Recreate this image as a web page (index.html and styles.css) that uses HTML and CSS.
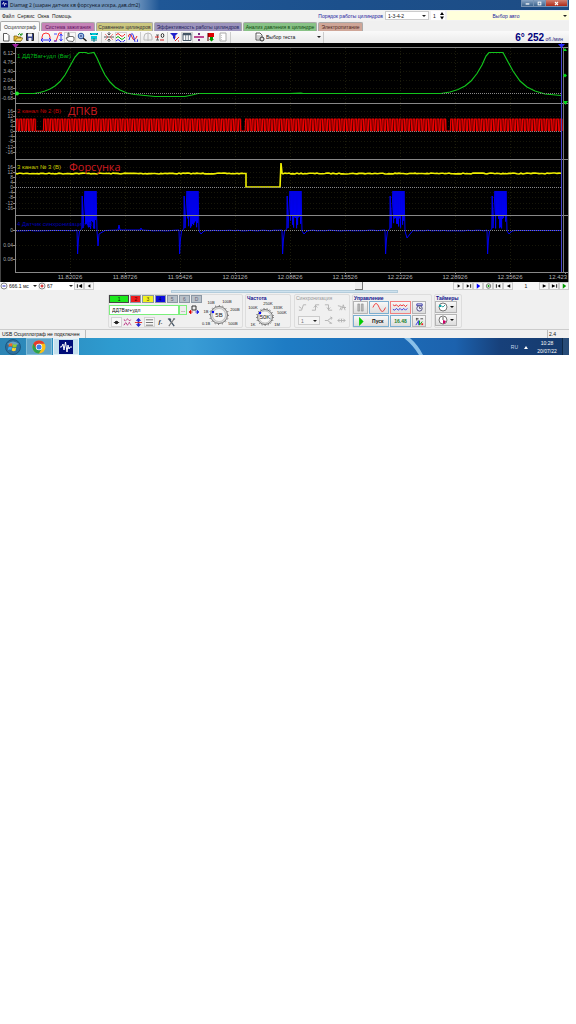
FILE: index.html
```html
<!DOCTYPE html>
<html lang="ru">
<head>
    <meta charset="UTF-8">
    <meta name="viewport" content="width=device-width, initial-scale=1.0">
    <title>Diamag 2</title>
    <link rel="stylesheet" href="styles.css">
</head>
<body>
    <div class="desktop">
        <header class="titlebar">
            <svg class="app-icon" viewBox="0 0 8 8"><rect width="8" height="8" rx="1" fill="#000c80"/><path d="M1 4h1l1-2 1 4 1-3 1 1h1" fill="none" stroke="#fff" stroke-width=".8"/></svg>
            <h1>Diamag 2 (шаран датчик кв форсунка искра, дав.dm2)</h1>
            <div class="window-buttons">
                <button class="min" aria-label="Свернуть"><svg viewBox="0 0 12 7"><path d="M4 4h4" stroke="#fff" stroke-width="1.4"/></svg></button>
                <button class="max" aria-label="Развернуть"><svg viewBox="0 0 12 7"><rect x="4.5" y="2" width="3" height="3" fill="none" stroke="#fff"/></svg></button>
                <button class="close" aria-label="Закрыть"><svg viewBox="0 0 16 7"><path d="M6.5 2l3 3m0-3l-3 3" stroke="#fff" stroke-width="1.1"/></svg></button>
            </div>
        </header>

        <div class="menubar">
            <nav>
                <a href="#">Файл</a>
                <a href="#">Сервис</a>
                <a href="#">Окна</a>
                <a href="#">Помощь</a>
            </nav>
            <label class="order-label" for="order">Порядок работы цилиндров</label>
            <span class="drop order"><select id="order"><option>1-3-4-2</option></select></span>
            <input class="cylinder" type="text" value="1" aria-label="Цилиндр">
            <svg class="spin" viewBox="0 0 6 9"><path d="M1 4l2-3 2 3zM1 5.500l2 3 2-3z"/></svg>
            <span class="drop car"><select aria-label="Авто"><option>Выбор авто</option></select></span>
        </div>

        <div class="tabs">
            <button class="tab active">Осциллограф</button>
            <button class="tab ignition">Система зажигания</button>
            <button class="tab compare">Сравнение цилиндров</button>
            <button class="tab effect">Эффективность работы цилиндров</button>
            <button class="tab pressure">Анализ давления в цилиндре</button>
            <button class="tab power">Электропитание</button>
        </div>

        <div class="toolbar">
            <div class="tools files">
                <button aria-label="Новый"><svg viewBox="0 0 10 10"><path d="M2.500 1.500h3.500l2 2v5.500h-5.500z" fill="#fff" stroke="#333" stroke-width=".8"/></svg></button>
                <button aria-label="Открыть"><svg viewBox="0 0 10 10"><path d="M1 9V4h3l1 1h3v4z" fill="#e8b838" stroke="#6b5000" stroke-width=".7"/><path d="M2 9l2-3h6L8 9z" fill="#ffe070" stroke="#6b5000" stroke-width=".6"/><path d="M5 3q2-3 3 0M7 3h2V1" fill="none" stroke="#080" stroke-width=".9"/></svg></button>
                <button aria-label="Сохранить"><svg viewBox="0 0 10 10"><path d="M1.500 1.500h7v7h-7z" fill="#38458c" stroke="#222"/><path d="M3 1.500h4v3H3zM3.500 6h3v3h-3z" fill="#eee"/></svg></button>
            </div>
            <div class="tools">
                <button aria-label="Период"><svg viewBox="0 0 10 10"><path d="M1 7V5q0-4 4-4t4 4v2" fill="none" stroke="#f33"/><path d="M0 8h10M2 6L0 8l2 2m6-4l2 2-2 2" fill="none" stroke="#22f" stroke-width=".9"/></svg></button>
                <button aria-label="Фронт"><svg viewBox="0 0 10 10"><path d="M1 9h2L6 1h3" fill="none" stroke="#f33"/><path d="M8 2v7M6.500 4L8 2l1.500 2m-3 3L8 9l1.500-2M1 2h3M1 9h3" fill="none" stroke="#22f" stroke-width=".8"/></svg></button>
                <button class="pressed" aria-label="Рука"><svg viewBox="0 0 10 10"><path d="M3 9L1 6l1-.5 1 .5V1h1v4l1-1 1 1 1-1 1 1 1 0v3l-1 1.500z" fill="#fff" stroke="#333" stroke-width=".7"/></svg></button>
                <button aria-label="Лупа"><svg viewBox="0 0 10 10"><circle cx="4" cy="4" r="2.800" fill="#bdf" stroke="#224c9c"/><path d="M6 6l3.500 3" stroke="#222" stroke-width="1.500"/><path d="M2.500 4h3M4 2.500v3" stroke="#226" stroke-width=".7"/></svg></button>
                <button aria-label="Маркеры"><svg viewBox="0 0 10 10"><path d="M1 1h8v2H1zM2 4h6v3H2z" fill="#00c8d8"/><path d="M5 6v4M2 8h6M1 1l2 2m6-2L7 3" stroke="#087c8c"/></svg></button>
            </div>
            <div class="tools">
                <button aria-label="Центр"><svg viewBox="0 0 10 10"><path d="M0 5h10M5 0v3M5 7v3M3.500 1.500L5 3l1.500-1.500m-3 7L5 7l1.500 1.500" fill="none" stroke="#333" stroke-width=".8"/><path d="M1 2l3 3-3 3m8-6L6 5l3 3" fill="none" stroke="#e44" stroke-width=".6"/></svg></button>
                <button class="pressed" aria-label="Каналы"><svg viewBox="0 0 10 10"><path d="M0 3q2-3 4 0t5-1" fill="none" stroke="#e22"/><path d="M0 6q2-3 4 0t5-1" fill="none" stroke="#0a0"/><path d="M0 9q2-3 4 0t5-1" fill="none" stroke="#22e"/></svg></button>
                <button aria-label="Наложение"><svg viewBox="0 0 10 10"><path d="M0 5q2-6 4 0t5-1" fill="none" stroke="#e22"/><path d="M1 8q3-12 5-2t4 1" fill="none" stroke="#33e"/></svg></button>
            </div>
            <div class="tools">
                <button aria-label="Сдвиг"><svg viewBox="0 0 10 10"><path d="M1 8V5q0-4 4-4t4 4v3zM5 1v8" fill="none" stroke="#bbb"/></svg></button>
                <button aria-label="Ноль"><svg viewBox="0 0 10 10"><path d="M1 3h3M1 8h3M2.500 3v5" stroke="#666"/><path d="M0 5h4" stroke="#d22"/><ellipse cx="7.500" cy="3.500" rx="1.300" ry="2" fill="none" stroke="#333"/><path d="M5 8h4" stroke="#d22"/></svg></button>
            </div>
            <div class="tools">
                <button aria-label="Фильтр"><svg viewBox="0 0 10 10"><path d="M0 1h8L5 4v4L3 6V4z" fill="#22c"/><path d="M5 9l4-4M5 5h1M8 9h1" stroke="#d22"/></svg></button>
                <button class="pressed" aria-label="Таблица"><svg viewBox="0 0 10 10"><path d="M1 1.500h8v7H1z" fill="#fff" stroke="#456" /><path d="M1 2.500h8" stroke="#456" stroke-width="1.500"/><path d="M3.700 3v5M6.300 3v5" stroke="#456" stroke-width=".7"/></svg></button>
                <button aria-label="Делитель"><svg viewBox="0 0 10 10"><path d="M0 5h10" stroke="#a06" stroke-width="1.400"/><path d="M5 1v2M5 7v2" stroke="#506" stroke-width="1.600"/></svg></button>
                <button aria-label="Флаг"><svg viewBox="0 0 10 10"><path d="M2 1h6v4H2z" fill="#d00"/><path d="M2 1v8" stroke="#500"/><path d="M4 5h3v2h1L5.500 9.500 3 7h1z" fill="#090"/></svg></button>
                <button aria-label="Отчёт"><svg viewBox="0 0 10 10"><path d="M2 1h6v8H2z" fill="#fff" stroke="#aaa"/><path d="M3.500 3v5" stroke="#ccc" stroke-dasharray="1"/></svg></button>
            </div>
            <span class="drop test">
                <svg viewBox="0 0 10 10"><path d="M1 1h4l2 2v5H1z" fill="#fff" stroke="#333" stroke-width=".8"/><path d="M2 4h4M2 6h3" stroke="#666" stroke-width=".6"/><circle cx="7" cy="7" r="2" fill="#ddd" stroke="#333"/></svg>
                <select aria-label="Тест"><option>Выбор теста</option></select>
            </span>
            <div class="rpm"><b>6° 252</b> об./мин</div>
        </div>

        <main class="scope">
            <svg id="plot" viewBox="0 43 569 239" role="img" aria-label="Осциллограмма">
                <g id="grid"></g>
                <g id="traces"></g>
                <g id="axes"></g>
                <g class="channel-names">
                    <text x="17" y="58" fill="#00b818">1 ДД7Bar+удл (Bar)</text>
                    <text x="17" y="113" fill="#c00000">2 канал № 2 (В)</text>
                    <text x="17" y="169" fill="#c8c800">3 канал № 3 (В)</text>
                    <text x="17" y="226" fill="#0000b8">4 Датчик синхронизации (В)</text>
                </g>
                <g class="notes">
                    <text x="68" y="115">ДПКВ</text>
                    <text x="69" y="171">Форсунка</text>
                </g>
            </svg>
        </main>

        <div class="playback">
            <svg class="round" viewBox="0 0 8 8"><circle cx="4" cy="4" r="3" fill="#fff" stroke="#888"/><path d="M2.500 4h3" stroke="#22c"/></svg>
            <span class="drop span"><select aria-label="Время"><option>666.1 мс</option></select></span>
            <svg class="round" viewBox="0 0 8 8"><circle cx="4" cy="4" r="3" fill="#fff" stroke="#888"/><path d="M2.500 4h3M4 2.500v3" stroke="#c00"/></svg>
            <span class="drop zoom"><select aria-label="Масштаб"><option>67</option></select></span>
            <button aria-label="В начало"><svg viewBox="0 0 8 6"><path d="M1 1h1v4H1zM6 1v4L3 3zM6 1h1v4H6z"/></svg></button>
            <button aria-label="Назад"><svg viewBox="0 0 8 6"><path d="M5 1v4L2 3z"/></svg></button>
            <div class="scrollbar"><div class="thumb"></div></div>
            <button aria-label="Вперёд"><svg viewBox="0 0 8 6"><path d="M3 1v4l3-2z"/></svg></button>
            <button aria-label="В конец"><svg viewBox="0 0 8 6"><path d="M2 1v4l3-2zM6 1h1v4H6z"/></svg></button>
            <button aria-label="Воспроизвести"><svg viewBox="0 0 8 6"><path d="M2 0v6l4-3z" fill="#00f"/></svg></button>
            <button aria-label="Повтор"><svg viewBox="0 0 8 8"><circle cx="4" cy="4" r="3" fill="none" stroke="#555"/><path d="M3 2v4l3-2z" fill="#090"/></svg></button>
            <button aria-label="Первый"><svg viewBox="0 0 8 6"><path d="M1 1h1v4H1zM6 1v4L3 3z"/></svg></button>
            <button aria-label="Предыдущий"><svg viewBox="0 0 8 6"><path d="M6 1v4L2 3z"/></svg></button>
            <output>1</output>
            <button aria-label="Следующий"><svg viewBox="0 0 8 6"><path d="M2 1v4l4-2z"/></svg></button>
            <button aria-label="Последний"><svg viewBox="0 0 8 6"><path d="M1 1v4l4-2zM6 1h1v4H6z"/></svg></button>
            <button aria-label="Старт"><svg viewBox="0 0 8 6"><path d="M2 0v6l4-3z" fill="#090"/></svg></button>
        </div>
        <div class="splitter"><span></span></div>

        <div class="panels">
            <section class="panel channel">
                <div class="channel-main">
                    <div class="channels">
                        <button class="ch1">1</button>
                        <button class="ch2">2</button>
                        <button class="ch3">3</button>
                        <button class="ch4">4</button>
                        <button>5</button>
                        <button>6</button>
                        <button>D</button>
                    </div>
                    <div class="sensor">
                        <input type="text" value="ДД7Bar+удл" aria-label="Датчик">
                        <button class="more" aria-label="Выбрать датчик">...</button>
                        <svg viewBox="0 0 10 10"><path d="M3 1h4v4H3z" fill="#eee" stroke="#333"/><path d="M0 7h4M0 7l2-2v4z" stroke="#d00" fill="#d00" stroke-width=".6"/><path d="M6 7h4M10 7L8 5v4z" stroke="#22d" fill="#22d" stroke-width=".6"/></svg>
                    </div>
                    <div class="channel-tools">
                        <button class="pressed" aria-label="Точка"><svg viewBox="0 0 10 10"><circle cx="5" cy="5" r="2" fill="#222"/><path d="M2 5h6" stroke="#222"/></svg></button>
                        <button aria-label="Шум"><svg viewBox="0 0 10 10"><path d="M1 2l2 1 2-2 2 2 2-1M1 8l2-3 2 3 2-3 2 3" fill="none" stroke="#a06" stroke-dasharray="1.500 .5"/></svg></button>
                        <button aria-label="Инверсия"><svg viewBox="0 0 10 10"><path d="M5 0L2 3h2v4H2l3 3 3-3H6V3h2z" fill="#22c"/><path d="M1 5h8" stroke="#d22"/></svg></button>
                        <button class="pressed" aria-label="Линии"><svg viewBox="0 0 10 10"><path d="M1 2h8M1 5h8M1 8h8" stroke="#444" stroke-width=".8"/></svg></button>
                        <button class="fx">fₓ</button>
                        <button aria-label="Настройка"><svg viewBox="0 0 10 10"><path d="M2 1l6 8" stroke="#456" stroke-width="1.500"/><path d="M8 1L2 9" stroke="#777" stroke-width="1.200"/><path d="M1 1h3v2M7 1h2" stroke="#345" fill="none"/></svg></button>
                    </div>
                </div>
                <svg class="dial" viewBox="0 0 42 32">
                    <circle cx="19" cy="20" r="8.500" fill="#ddd" stroke="#777"/>
                    <circle cx="19" cy="20" r="9.500" fill="none" stroke="#333" stroke-width="1" stroke-dasharray=".7 3"/>
                    <circle cx="19" cy="20" r="6.500" fill="#f6f6f6" stroke="#aaa" stroke-width=".6"/>
                    <circle cx="13" cy="17" r="1.200" fill="#00f"/>
                    <text x="19" y="22" class="value">5В</text>
                    <text x="6" y="30">0.1В</text><text x="6" y="18">1В</text><text x="11" y="9">10В</text>
                    <text x="27" y="8">100В</text><text x="35" y="16">200В</text><text x="33" y="30">500В</text>
                </svg>
            </section>

            <section class="panel rate">
                <h2>Частота</h2>
                <svg class="dial" viewBox="0 0 42 27">
                    <circle cx="19" cy="16" r="7.500" fill="#ddd" stroke="#777"/>
                    <circle cx="19" cy="16" r="8.500" fill="none" stroke="#333" stroke-dasharray=".7 2.500"/>
                    <circle cx="19" cy="16" r="6" fill="#f6f6f6" stroke="#aaa" stroke-width=".6"/>
                    <circle cx="14" cy="12" r="1.200" fill="#00f"/>
                    <text x="19" y="18" class="value">50K</text>
                    <text x="7" y="25">1K</text><text x="7" y="8">100K</text><text x="22" y="4">250K</text>
                    <text x="32" y="8">333K</text><text x="36" y="13">500K</text><text x="31" y="25">1М</text>
                </svg>
            </section>

            <section class="panel sync">
                <h2>Синхронизация</h2>
                <div class="row">
                    <svg viewBox="0 0 10 10"><path d="M1 8h3l2-6h3M1 4l3 2"/></svg>
                    <svg viewBox="0 0 10 10"><path d="M1 8h4V2h4M3 5l2-2 2 2"/></svg>
                    <svg viewBox="0 0 10 10"><path d="M1 2h4v6h4M3 5l2 2 2-2"/></svg>
                    <svg viewBox="0 0 10 10"><path d="M1 3l4 1-2 4M5 8l2-6 2 6M6 5h4"/></svg>
                </div>
                <div class="row">
                    <span class="drop"><select aria-label="Канал" disabled><option>1</option></select></span>
                    <svg viewBox="0 0 10 10"><path d="M1 5h3l4-3M4 5l4 3M7 1l2 1-1 2M6 8h3"/></svg>
                    <svg viewBox="0 0 10 10"><path d="M1 5h8M3 3L1 5l2 2M7 3l2 2-2 2M5 3v4"/></svg>
                </div>
            </section>

            <section class="panel control">
                <h2>Управление</h2>
                <div class="control-grid">
                    <button class="pause" aria-label="Пауза"><svg viewBox="0 0 10 10"><path d="M2 1h2v8H2zM6 1h2v8H6z" fill="#bbb" stroke="#777" stroke-width=".5"/></svg></button>
                    <button class="blue" aria-label="Синус"><svg viewBox="0 0 16 10"><path d="M1 5q3.500-9 7 0t7 0" fill="none" stroke="#e33"/></svg></button>
                    <button class="red" aria-label="Запись"><svg viewBox="0 0 18 10"><path d="M1 2l2 1 2-1 2 2 2-2 2 1 2-1 2 2 2-2" fill="none" stroke="#e22"/><path d="M1 7l2 1 2-2 2 2 2-2 2 2 2-2 2 2 2-2" fill="none" stroke="#33d"/></svg></button>
                    <button aria-label="Таймер"><svg viewBox="0 0 10 10"><path d="M2 1h6v2H2z" fill="none" stroke="#33a"/><circle cx="5" cy="6" r="3" fill="#eef" stroke="#447"/><path d="M5 4v2h2" stroke="#222" fill="none" stroke-width=".7"/></svg></button>
                    <button class="blue start"><svg viewBox="0 0 6 8"><path d="M1 0v8l4-4z" fill="#0c0"/></svg>Пуск</button>
                    <button class="blue clock">16.48</button>
                    <button aria-label="Каналы"><svg viewBox="0 0 10 10"><path d="M1 2h3M6 2h3M2 1v3" stroke="#444"/><path d="M1 9l3-5v5" fill="none" stroke="#33d"/><path d="M5 4v5l3-4" fill="none" stroke="#0a0"/><path d="M7 7h2v2H7z" fill="#e22"/></svg></button>
                </div>
            </section>

            <section class="panel timers">
                <h2>Таймеры</h2>
                <button aria-label="Таймер 1"><svg viewBox="0 0 10 10"><circle cx="5" cy="5" r="4" fill="#fff" stroke="#555" stroke-width=".8"/><path d="M5 5L2 3M5 5l2-2" stroke="#088" stroke-width=".8"/><path d="M1 3h2v2H1z" fill="#0aa"/></svg><i></i></button>
                <button aria-label="Таймер 2"><svg viewBox="0 0 10 10"><circle cx="5" cy="5" r="4" fill="#fff" stroke="#555" stroke-width=".8"/><path d="M5 5l3 1-1 2-2 1z" fill="#c06"/><path d="M5 2v3" stroke="#333" stroke-width=".8"/></svg><i></i></button>
            </section>
        </div>

        <div class="statusbar">
            <span class="status">USB Осциллограф не подключен</span>
            <span class="version">2.4</span>
        </div>

        <footer class="taskbar">
            <button class="start-orb" aria-label="Пуск">
                <svg viewBox="0 0 16 16"><circle cx="8" cy="8" r="7.500" fill="#2c6f9c" stroke="#123f66" stroke-width=".6"/><path d="M2 5q6-5 12 0-6 3-12 0" fill="#8fc4dc" opacity=".6"/><path d="M4 5q2-1.500 3.600-.3L7 7.600Q5.500 6.600 3.500 7.800z" fill="#f06a28"/><path d="M8 5q2 1.200 4 .1l-.7 3Q9.500 9 7.500 8z" fill="#8fd02c"/><path d="M3.400 8.300q2-1.200 3.600-.1l-.6 2.900q-1.800-1-3.600.1z" fill="#38a8f0"/><path d="M7.400 8.600q2 1 3.800.2l-.7 2.900q-2 1-3.800-.2z" fill="#ffd02c"/></svg>
            </button>
            <button class="task" aria-label="Chrome">
                <svg viewBox="0 0 14 14"><circle cx="7" cy="7" r="6.500" fill="#fbc116"/><path d="M1.370 3.750A6.500 6.500 0 0 0 7 13.500L9.800 8.600 7 7z" fill="#2da24c"/><path d="M1.370 3.750A6.500 6.500 0 0 1 12.630 3.750H7L4.200 8.600z" fill="#e33b2e"/><circle cx="7" cy="7" r="3.200" fill="#fff"/><circle cx="7" cy="7" r="2.500" fill="#3f7de8"/></svg>
            </button>
            <button class="task current" aria-label="Diamag 2">
                <svg viewBox="0 0 14 14"><rect width="14" height="14" fill="#000c78"/><path d="M1 7h1.500L4 4l1 6 1.500-8 1.500 10 1-7 1 4 1-2h2" fill="none" stroke="#fff"/></svg>
            </button>
            <svg class="streak" viewBox="0 0 24 17"><path d="M0 0h6q8 7 13 17h-4Q9 7 0 0z" fill="#a6d6f5" opacity=".8"/></svg>
            <span class="lang">RU</span>
            <svg class="tray" viewBox="0 0 4 3"><path d="M0 3l2-3 2 3z" fill="#fff"/></svg>
            <time>10:28<br>20/07/22</time>
            <span class="show-desktop"></span>
        </footer>
    </div>

    <script src="script.js"></script>
</body>
</html>
```

FILE: styles.css
```css
* {
    box-sizing: border-box;
}
body {
    margin: 0;
    padding-right: 7px;
    background: #fff;
    font-family: "Liberation Sans", Arial, sans-serif;
    font-size: 5px;
    line-height: 6px;
    color: #111;
}
button, input, select {
    font: inherit;
    color: inherit;
    margin: 0;
    padding: 0;
    border: 0;
    background: none;
    border-radius: 0;
    min-width: 0;
}
button {
    display: flex;
    align-items: center;
    justify-content: center;
}
select {
    appearance: none;
    flex: 1;
    opacity: 1;
}
svg {
    display: block;
    flex: none;
}
h1, h2 {
    margin: 0;
    font: inherit;
}
.desktop {
    background: #f0f0f0;
}

/* drop-down with a small arrow */
.drop {
    display: flex;
    align-items: center;
    padding: 0 2px;
    background: #fff;
}
.drop::after {
    content: "";
    border: 2px solid transparent;
    border-top-color: #222;
    border-bottom: 0;
}

/* title bar */
.titlebar {
    display: flex;
    height: 10px;
    padding-left: 1px;
    background: linear-gradient(90deg, #7d9dc0, #6d93bd 24%, #1f5796 28%, #1c508c 60%, #1d4c84);
}
.app-icon {
    width: 7px;
    height: 8px;
    margin-right: 2px;
}
.titlebar h1 {
    flex: 1;
    font-family: "Open Sans", sans-serif;
    line-height: 10px;
    color: #0a1220;
}
.window-buttons {
    display: flex;
    height: 7px;
    margin-right: 1px;
    border: 1px solid #7893b4;
    border-top: 0;
}
.window-buttons button {
    width: 12px;
    background: linear-gradient(#8aa5c4, #3e658f);
    border-right: 1px solid #7893b4;
}
.window-buttons svg {
    width: 100%;
    height: 7px;
}
.window-buttons .close {
    width: 21px;
    border: 0;
    background: linear-gradient(#d08070, #b02a18);
}

/* menu */
.menubar {
    display: flex;
    align-items: center;
    height: 11px;
    padding-left: 2px;
    background: #f2f2f2;
}
.menubar nav {
    display: flex;
    flex: 1;
    gap: 3px;
}
.menubar a {
    color: #222;
    text-decoration: none;
}
.order-label {
    color: #22229c;
    margin-right: 2px;
}
.order {
    width: 44px;
    height: 9px;
    border: 1px solid #ccc;
}
.cylinder {
    width: 8px;
    height: 9px;
    margin-left: 2px;
    padding-left: 2px;
    background: #fff;
}
.spin {
    width: 6px;
    height: 9px;
    margin-right: 2px;
    background: #fff;
}
.car {
    width: 122px;
    height: 9px;
    background: #ffffdc;
    color: #22229c;
}
.car select {
    text-align: center;
    text-align-last: center;
}

/* tabs */
.tabs {
    display: flex;
    gap: 1px;
    height: 10px;
}
.tab {
    height: 9px;
    margin-top: 1px;
    white-space: nowrap;
    border: 1px solid #aaa;
    border-bottom: 0;
    border-radius: 2px 2px 0 0;
    color: #333;
}
.tab.active {
    width: 40px;
    height: 10px;
    margin-top: 0;
    background: #fafafa;
}
.ignition {
    width: 54px;
    background: #c583b7;
    color: #601060;
}
.compare {
    width: 57px;
    background: #cbc780;
}
.effect {
    width: 88px;
    background: #9d94bd;
    color: #22225c;
}
.pressure {
    width: 74px;
    background: #88c286;
    color: #104c10;
}
.power {
    width: 45px;
    background: #cfa698;
    color: #50281c;
}

/* toolbar */
.toolbar {
    display: flex;
    align-items: center;
    height: 12px;
    background: linear-gradient(#fafafa, #eaeaea);
}
.tools {
    display: flex;
    height: 11px;
    padding: 0 1px;
    border-right: 1px solid #ccc;
}
.tools.files {
    padding: 0 2px 0 0;
}
.tools button {
    width: 12px;
}
.tools svg, .test svg {
    width: 10px;
    height: 10px;
}
.pressed {
    background: #f8f8f8;
    box-shadow: inset 0 0 0 1px #d4d4d4;
}
.test {
    width: 70px;
    gap: 1px;
    margin-left: 22px;
    background: none;
}
.rpm {
    flex: 1;
    padding-right: 6px;
    text-align: right;
    color: #22227c;
    border-left: 1px solid #ccc;
}
.rpm b {
    font-size: 10px;
    line-height: 11px;
    color: #00007c;
}

/* oscillogram */
.scope {
    background: #000;
}
#plot {
    width: 100%;
    height: auto;
}
#plot text {
    font-size: 6px;
}
#plot .scale {
    font-size: 5px;
    fill: #aaa;
    text-anchor: end;
}
#plot .time {
    fill: #b4b4b4;
    text-anchor: middle;
}
#plot .notes text {
    font-family: "Open Sans", "Noto Sans", sans-serif;
    font-size: 11px;
    fill: #d01c20;
}

/* playback row */
.playback {
    display: flex;
    align-items: center;
    height: 8px;
    background: #f6f6f6;
}
.playback button {
    width: 10px;
    height: 8px;
    border: 1px solid #ccc;
}
.playback button svg {
    width: 7px;
    height: 6px;
}
.playback .round {
    width: 8px;
    height: 8px;
}
.span, .zoom {
    height: 8px;
    padding: 0 1px;
}
.span {
    width: 30px;
}
.zoom {
    width: 28px;
}
.scrollbar {
    flex: 1;
    display: flex;
    justify-content: flex-end;
    padding-right: 90px;
}
.thumb {
    width: 8px;
    height: 8px;
    background: #eee;
    border-right: 1px solid #777;
    border-bottom: 1px solid #777;
}
.playback output {
    width: 26px;
    text-align: center;
}
.splitter {
    display: flex;
    justify-content: center;
    height: 4px;
}
.splitter span {
    width: 40%;
    height: 3px;
    background: #cfe2ee;
    border: 1px solid #b4cddc;
}

/* bottom panels */
.panels {
    display: flex;
    gap: 2px;
    height: 35px;
    padding: 0 0 1px 108px;
}
.panel {
    border: 1px solid #ddd;
    border-radius: 2px;
}
.panel h2 {
    padding-left: 1px;
    font-weight: bold;
    color: #10108c;
}
.channel {
    display: flex;
    width: 135px;
}
.channel-main {
    display: flex;
    flex-direction: column;
    gap: 2px;
    width: 94px;
}
.channels {
    display: flex;
    gap: 1px;
    height: 8px;
}
.channels button {
    flex: 1;
    background: #b8c0c8;
    border: 1px solid #8c98a4;
    color: #667;
}
.channels .ch1 {
    flex: 2;
    background: #1ce81c;
    border-color: #444;
    color: #111;
}
.channels .ch2 {
    background: #f01c1c;
    color: #400;
}
.channels .ch3 {
    background: #f0f020;
    color: #440;
}
.channels .ch4 {
    background: #0c0ce0;
    color: #004;
}
.sensor {
    display: flex;
    height: 10px;
}
.sensor input {
    flex: 1;
    padding-left: 2px;
    background: #fff;
    border: 1px solid #7cf07c;
}
.sensor .more {
    width: 8px;
    border: 1px solid #7cf07c;
    background: #eee;
}
.sensor svg {
    width: 10px;
    height: 10px;
    margin: 0 3px 0 2px;
}
.channel-tools {
    display: flex;
    height: 11px;
    padding-left: 2px;
}
.channel-tools button {
    width: 11px;
}
.channel-tools svg {
    width: 9px;
    height: 9px;
}
.channel-tools .fx {
    font: italic bold 6px/8px "Liberation Serif", serif;
}
.dial {
    width: 42px;
}
.channel .dial {
    margin-left: -2px;
}
.dial text {
    font-size: 4px;
    text-anchor: middle;
    fill: #222;
}
.dial .value {
    font-size: 6px;
}
.rate {
    width: 46px;
}
.sync {
    width: 56px;
    margin-left: 1px;
}
.sync h2 {
    font-weight: normal;
    color: #999;
}
.sync .row {
    display: flex;
    align-items: center;
    gap: 4px;
    height: 13px;
    padding-left: 3px;
}
.sync .row > svg {
    width: 9px;
    height: 9px;
    fill: none;
    stroke: #b0b0b0;
}
.sync .drop {
    width: 22px;
    height: 9px;
    border: 1px solid #ccc;
    color: #777;
    background: #f4f4f4;
}
.control {
    width: 80px;
}
.control-grid {
    display: grid;
    grid-template-columns: 15px 20px 21px 14px;
    grid-template-rows: 13px 12px;
    gap: 1px;
}
.control-grid button, .timers button {
    border: 1px solid #b4b4b4;
    background: linear-gradient(#f8f8f8, #ddd);
}
.control-grid svg {
    height: 9px;
}
.control-grid .blue {
    border-color: #7caed0;
}
.control-grid .red {
    border-color: #f08080;
}
.control-grid .start {
    grid-column: span 2;
    gap: 7px;
    font-weight: bold;
}
.control-grid .clock {
    font-weight: bold;
    color: #18802c;
}
.timers {
    width: 28px;
}
.timers button {
    gap: 2px;
    width: 22px;
    height: 12px;
    margin-bottom: 1px;
}
.timers svg {
    width: 10px;
    height: 10px;
}
.timers i {
    border: 2px solid transparent;
    border-top-color: #111;
    border-bottom: 0;
}

/* status bar */
.statusbar {
    display: flex;
    justify-content: space-between;
    height: 9px;
    line-height: 8px;
    border-top: 1px solid #ccc;
}
.status {
    width: 86px;
    padding-left: 2px;
    white-space: nowrap;
    border-right: 1px solid #bbb;
}
.version {
    width: 22px;
    padding-left: 1px;
    border-left: 1px solid #bbb;
}

/* taskbar */
.taskbar {
    display: flex;
    align-items: center;
    height: 17px;
    background: linear-gradient(90deg, #2c84b4, #2e9bd0 20%, #3a9ed6 33%, #1e7cc4 50%, #1c62ae 80%, #17407a 88%, #153a6c);
    color: #fff;
    overflow: hidden;
}
.start-orb {
    width: 26px;
    height: 17px;
}
.start-orb svg {
    width: 16px;
    height: 16px;
}
.task {
    width: 26px;
    height: 17px;
    margin-right: 1px;
    background: #5fa3c8;
    border: 1px solid #7fbcd8;
}
.task.current {
    background: #c4e0ee;
    border-color: #e4f2f8;
}
.task svg {
    width: 14px;
    height: 14px;
}
.streak {
    width: 24px;
    height: 17px;
    margin-left: auto;
}
.lang {
    margin-left: 83px;
    font-size: 5px;
    color: #c8d8ec;
}
.tray {
    width: 4px;
    height: 3px;
    margin: 2px 8px 0 6px;
}
.taskbar time {
    width: 22px;
    line-height: 8px;
    text-align: center;
}
.show-desktop {
    width: 7px;
    height: 17px;
    margin-left: 4px;
    background: #284c78;
    border-left: 1px solid #0c2848;
}
```

FILE: script.js
```javascript
const NS = 'http://www.w3.org/2000/svg';
const grid = document.getElementById('grid');
const traces = document.getElementById('traces');
const axes = document.getElementById('axes');

function add(parent, tag, attrs, text) {
    const el = document.createElementNS(NS, tag);
    for (const key in attrs) el.setAttribute(key, attrs[key]);
    if (text !== undefined) el.textContent = text;
    parent.appendChild(el);
}

function line(parent, x1, y1, x2, y2, stroke, dash) {
    add(parent, 'path', { d: `M${x1} ${y1}L${x2} ${y2}`, stroke, fill: 'none', 'stroke-dasharray': dash || 'none' });
}

function trace(points, stroke, width) {
    add(traces, 'polyline', { points: points.map(p => p.join(',')).join(' '), fill: 'none', stroke, 'stroke-width': width || 1 });
}

// repeatable noise
let seed = 7;
function noise() {
    seed = (seed * 16807) % 2147483647;
    return seed / 2147483647;
}

// scales of the four channels: [value, y]
const scales = [
    [['6.12', 53], ['4.76', 62], ['3.40', 71], ['2.04', 80], ['0.68', 88], ['0', 93], ['-0.68', 98]],
    [['16', 111], ['12', 116], ['8', 121], ['4', 126], ['0', 131], ['-4', 136], ['-8', 141], ['-12', 147], ['-16', 152]],
    [['16', 167], ['12', 172], ['8', 177], ['4', 182], ['0', 187], ['-4', 192], ['-8', 197], ['-12', 203], ['-16', 208]],
    [['0', 230], ['0.04', 245], ['0.08', 259]]
];
scales.flat().forEach(([value, y]) => {
    if (value !== '0') line(grid, 16, y + .5, 561, y + .5, '#17170a', '1 2');
    line(axes, 13, y + .5, 15, y + .5, '#888');
    add(axes, 'text', { x: 13, y: y + 2, class: 'scale' }, value);
});

const times = ['11.82026', '11.88726', '11.95426', '12.02126', '12.08826', '12.15526', '12.22226', '12.28926', '12.35626', '12.423'];
times.forEach((t, i) => {
    const x = 70 + i * 55;
    if (i < 9) line(grid, x + .5, 48, x + .5, 272, '#1c1c0c', '1 2');
    line(axes, x + .5, 272, x + .5, 274, '#888');
    add(axes, 'text', { x: i < 9 ? x : 558, y: 279, class: 'time' }, t);
});

// pressure sensor
trace([
    [15, 93.5], [34, 93.5], [40, 92.5], [45, 91], [50, 89], [55, 86], [60, 81.5], [65, 75], [70, 66], [75, 57], [79, 52.5],
    [86, 52.5], [88, 53.5], [94, 52.5], [97, 58], [101, 67], [105, 75], [110, 82], [115, 87], [120, 90], [127, 93], [135, 94.5],
    [145, 95.5], [155, 96.5], [185, 96.5], [192, 95], [198, 93.5], [289, 93.5], [301, 93], [303, 93.5], [441, 93.5],
    [450, 92], [458, 89.5], [465, 86], [471, 81], [477, 73.5], [482, 65], [486, 56], [489, 52.5], [503, 52.5],
    [507, 60], [513, 71], [520, 81], [527, 87], [535, 91], [545, 94], [561, 95.5]
], '#12c41c', 1.2);

// crankshaft sensor, 60-2 teeth per turn
const teeth = [];
for (let x = 16; x < 560; x += 3.42) {
    const gap = [36, 240, 445].some(g => x > g - 1 && x < g + 4);
    const top = gap ? 131 : 119;
    if (!gap) add(traces, 'rect', { x, y: 119, width: 3.42, height: 12, fill: '#480000' });
    teeth.push([x, 131], [x + .4, top], [x + 2, top], [x + 2.4, 131]);
}
trace(teeth, '#ee0000', 1.1);

// injector
const injector = [];
for (let x = 15; x < 245; x += 2) injector.push([x, 173 + noise()]);
injector.push([246, 173.5], [246, 187], [280, 187], [281, 163], [282, 173]);
for (let x = 283; x < 562; x += 2) injector.push([x, 173 + noise()]);
trace(injector, '#f0f000', 1.6);

// sync sensor: base line and five bursts
const sync = [[15, 230.5]];
[85, 187, 290, 393, 495].forEach((x, n) => {
    for (let i = sync[sync.length - 1][0] + 3; i < x - 10; i += 4) sync.push([i, 230.2 + noise() * .7]);
    sync.push([x - 8, 230], [x - 7.4, 254], [x - 6.6, 240], [x - 5.5, 231], [x - 3.2, 229], [x - 2.8, 196], [x - 2, 228]);
    for (let i = 0; i < 11; i++) {
        sync.push([x + i, 191], [x + i + .6, 215 + noise() * 14]);
    }
    sync.push([x + 11, 191], [x + 12, 231]);
    if (n === 0) sync.push([x + 13, 246], [x + 14, 234]);
    else if (n === 3) sync.push([x + 14, 238], [x + 17, 234]);
    else sync.push([x + 14, 234], [x + 17, 231]);
    sync.push([x + 20, 230.5]);
    if (n === 0) sync.push([118, 230], [119, 225], [120, 230], [140, 230], [141, 228], [142, 230]);
});
sync.push([561, 230.5]);
trace(sync, '#0000f4');

// zero lines, frames and cursors
[93, 131, 187, 230].forEach(y => line(axes, 16, y + .5, 561, y + .5, '#888', '1 1'));
line(axes, 16, 93.5, 36, 93.5, '#12c41c');
line(axes, 199, 93.5, 441, 93.5, '#12c41c');
[47, 103, 159, 215, 272].forEach(y => line(axes, 15, y + .5, 568, y + .5, '#888'));
line(axes, 15.5, 43, 15.5, 272, '#888');
line(axes, .5, 43, .5, 282, '#444');
line(axes, 561.5, 43, 561.5, 272, '#4444cc');
line(axes, 563.5, 47, 563.5, 272, '#777');
line(axes, 568.5, 43, 568.5, 282, '#888');
add(axes, 'path', { d: 'M12 44h7l-3.500 4z', fill: '#a020a0' });
add(axes, 'path', { d: 'M558 44h7l-3.500 4z', fill: '#2828ff' });
add(axes, 'path', { d: 'M563 51l2-3 2 3zM563 75.500l2-2 2 2-2 2zM563 101h5l-2.500 4z', fill: '#00d818' });
add(axes, 'circle', { cx: 17, cy: 93.5, r: 2, fill: '#20e828' });
```
